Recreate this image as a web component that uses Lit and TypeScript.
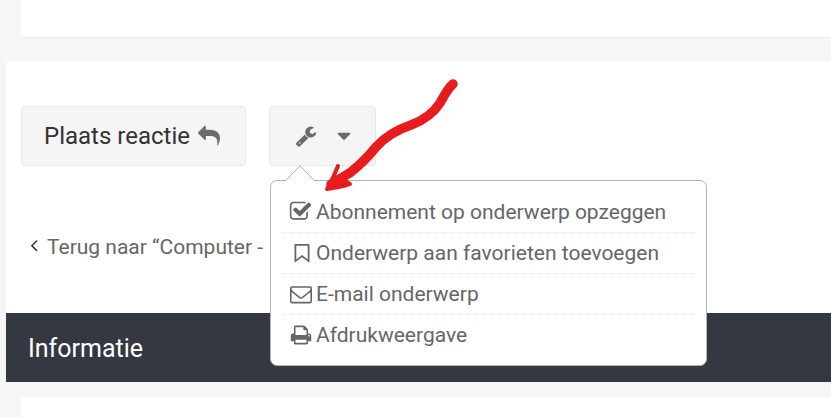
import { LitElement, html, css, svg } from "lit";
import { customElement } from "lit/decorators.js";

const P = {
  reply: "M1792 1120q0 166-127 451-3 7-10.5 24t-13.5 30-13 22q-12 17-28 17-15 0-23.5-10t-8.5-25q0-9 2.5-26.5t2.5-23.5q5-68 5-123 0-101-17.5-181t-48.5-138.5-80-101-105.5-69.5-133-42.5-154-21.5-175.5-6h-224v256q0 26-19 45t-45 19-45-19l-512-512q-19-19-19-45t19-45l512-512q19-19 45-19t45 19 19 45v256h224q713 0 875 403 53 134 53 333z",
  wrench: "M448 1472q0-26-19-45t-45-19-45 19-19 45 19 45 45 19 45-19 19-45zm644-420l-682 682q-37 37-90 37-52 0-91-37l-106-108q-38-36-38-90 0-53 38-91l681-681q39 98 114.5 173.5t173.5 114.5zm634-435q0 39-23 106-47 134-164.5 217.5t-258.5 83.5q-185 0-316.5-131.5t-131.5-316.5 131.5-316.5 316.5-131.5q58 0 121.5 16.5t107.5 46.5q16 11 16 28t-16 28l-293 169v224l193 107q5-3 79-48.5t135.5-81 70.5-35.5q15 0 23.5 10t8.5 25z",
  caret: "M1408 704q0 26-19 45l-448 448q-19 19-45 19t-45-19l-448-448q-19-19-19-45t19-45 45-19h896q26 0 45 19t19 45z",
  check: "M1472 930v318q0 119-84.5 203.5t-203.5 84.5h-832q-119 0-203.5-84.5t-84.5-203.5v-832q0-119 84.5-203.5t203.5-84.5h832q63 0 117 25 15 7 18 23 3 17-9 29l-49 49q-10 10-23 10-3 0-9-2-23-6-45-6h-832q-66 0-113 47t-47 113v832q0 66 47 113t113 47h832q66 0 113-47t47-113v-254q0-13 9-22l64-64q10-10 23-10 6 0 12 3 20 8 20 29zm231-489l-814 814q-24 24-57 24t-57-24l-430-430q-24-24-24-57t24-57l110-110q24-24 57-24t57 24l263 263 647-647q24-24 57-24t57 24l110 110q24 24 24 57t-24 57z",
  bookmark: "M272 96H1488Q1568 96 1568 176V1680Q1568 1750 1510 1730L896 1270 282 1730Q224 1750 224 1680V176Q224 96 272 96ZM384 256V1480L896 1080 1408 1480V256Z",
  envelope: "M1664 1504v-768q-32 36-69 66-268 206-426 338-51 43-83 67t-86.5 48.5-102.5 24.5h-2q-48 0-102.5-24.5t-86.5-48.5-83-67q-158-132-426-338-37-30-69-66v768q0 13 9.5 22.5t22.5 9.5h1472q13 0 22.5-9.5t9.5-22.5zm0-1051v-24.5l-.5-13-3-12.5-5.5-9-9-7.5-14-2.5h-1472q-13 0-22.5 9.5t-9.5 22.5q0 168 147 284 193 152 401 317 6 5 35 29.5t46 37.5 44.5 31.5 50.5 27.5 43 9h2q20 0 43-9t50.5-27.5 44.5-31.5 46-37.5 35-29.5q208-165 401-317 54-43 100.5-115.5t46.5-131.5zm128-37v1088q0 66-47 113t-113 47h-1472q-66 0-113-47t-47-113v-1088q0-66 47-113t113-47h1472q66 0 113 47t47 113z",
  print: "M448 1536h896v-256h-896v256zm0-640h896v-384h-160q-40 0-68-28t-28-68v-160h-640v640zm1152 64q0-26-19-45t-45-19-45 19-19 45 19 45 45 19 45-19 19-45zm128 0v416q0 13-9.5 22.5t-22.5 9.5h-224v160q0 40-28 68t-68 28h-960q-40 0-68-28t-28-68v-160h-224q-13 0-22.5-9.5t-9.5-22.5v-416q0-79 56.5-135.5t135.5-56.5h64v-544q0-40 28-68t68-28h672q40 0 88 20t76 48l152 152q28 28 48 76t20 88v256h64q79 0 135.5 56.5t56.5 135.5z",
  angle: "M1203 544q0 13-10 23l-393 393 393 393q10 10 10 23t-10 23l-50 50q-10 10-23 10t-23-10l-466-466q-10-10-10-23t10-23l466-466q10-10 23-10t23 10l50 50q10 10 10 23z",
};

const icon = (d: string, size: number, cls = "") =>
  html`<svg class="ic ${cls}" style="width:${size}px;height:${size}px" viewBox="0 0 1792 1792"><path d=${d}></path></svg>`;

const items: [string, string, number][] = [
  ["check", "Abonnement op onderwerp opzeggen", 23],
  ["bookmark", "Onderwerp aan favorieten toevoegen", 20],
  ["envelope", "E-mail onderwerp", 22],
  ["print", "Afdrukweergave", 22],
];

@customElement("app-root")
export class AppRoot extends LitElement {
  static styles = css`
    :host {
      display: block;
      position: relative;
      height: 417px;
      width: 831px;
      overflow: hidden;
      background: #f6f6f6;
      font-family: Roboto, "Liberation Sans", sans-serif;
      color: #333;
    }
    .ic { display: block; flex: none; fill: currentColor; }
    .top {
      margin-left: 21px;
      background: #fff;
      border-bottom: 1px solid #eee;
      box-sizing: border-box;
      height: 38px;
    }
    .main {
      margin: 23px 0 0 6px;
      height: 252px;
      box-sizing: border-box;
      background: #fff;
      padding: 45px 0 0 15px;
    }
    .actions { display: flex; gap: 23px; }
    .btn {
      display: flex;
      align-items: center;
      box-sizing: border-box;
      height: 60px;
      background: #f5f5f5;
      border: 1px solid #e8e8e8;
      border-radius: 4px;
      font-size: 24px;
      color: #333;
    }
    .reply { width: 225px; padding-left: 22px; gap: 8px; }
    .reply .ic { color: #6b6b6b; }
    .tools { width: 107px; padding-left: 25px; gap: 16px; color: #6b6b6b; }
    .back {
      display: flex;
      align-items: center;
      gap: 3px;
      margin: 68px 0 0 3px;
      font-size: 21px;
      line-height: 26px;
      color: #666;
      white-space: nowrap;
    }
    .back .ic { color: #333; margin-top: -4px; }
    .dark {
      margin-left: 6px;
      height: 69px;
      box-sizing: border-box;
      background: #343841;
      color: #fff;
      font-size: 25px;
      line-height: 71px;
      padding-left: 22px;
    }
    .bottom { margin: 15px 0 0 21px; height: 20px; background: #fff; }
    .menu {
      position: absolute;
      left: 270px;
      top: 180px;
      width: 437px;
      height: 186px;
      box-sizing: border-box;
      background: #fff;
      border: 1px solid #b4b4b4;
      border-radius: 7px;
      padding: 11px 11px 0 11px;
      color: #666;
      font-size: 21px;
    }
    .tip {
      position: absolute;
      left: 13px;
      top: -16px;
      width: 32px;
      height: 16px;
      display: block;
    }
    .row {
      display: flex;
      align-items: center;
      box-sizing: border-box;
      height: 41px;
      border-bottom: 1px dotted #e4e4e4;
      padding-bottom: 1px;
    }
    .row:last-child { border-bottom: none; }
    .slot { width: 34px; display: flex; justify-content: flex-end; padding-right: 4px; box-sizing: border-box; }
    .arrow {
      position: absolute;
      left: 0;
      top: 0;
      pointer-events: none;
    }
  `;

  render() {
    return html`
      <div class="top"></div>
      <div class="main">
        <div class="actions">
          <div class="btn reply">Plaats reactie ${icon(P.reply, 22)}</div>
          <div class="btn tools">${icon(P.wrench, 22)} ${icon(P.caret, 22)}</div>
        </div>
        <div class="back">${icon(P.angle, 20)}<span>Terug naar “Computer - </span></div>
      </div>
      <div class="dark">Informatie</div>
      <div class="bottom"></div>
      <div class="menu">
        <svg class="tip" viewBox="0 0 32 16">
          <path d="M1 16 L16 1 L31 16" fill="#fff" stroke="#b4b4b4" stroke-width="1"></path>
        </svg>
        ${items.map(
          ([k, t, s]) => html`<div class="row">
            <div class="slot">${icon((P as Record<string, string>)[k], s)}</div>
            <span>${t}</span>
          </div>`
        )}
      </div>
      <svg class="arrow" width="831" height="417" viewBox="0 0 831 417">
        ${svg`<path d="M453 84 C448 88 444 96 440 103 C433 114 424 120 411 125 C396 130 385 137 376 147 C368 157 361 164 351 172 C345 176 338 180 331 184"
          fill="none" stroke="#e81c1c" stroke-width="9.5" stroke-linecap="round" stroke-linejoin="round"></path>
        <path d="M338 166 C335 174 331 182 327 189 C335 188 343 187 350 184 C343 180 338 177 333 178 Z"
          fill="#e81c1c" stroke="#e81c1c" stroke-width="4" stroke-linejoin="round"></path>`}
      </svg>
    `;
  }
}
